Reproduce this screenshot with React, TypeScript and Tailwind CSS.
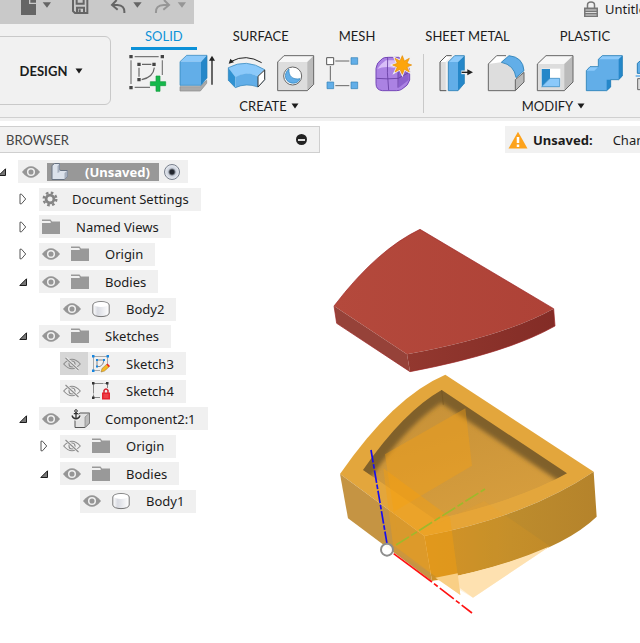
import React from "react";

type Visibility = "on" | "off" | "none";
type IconKind = "gear" | "folder" | "body" | "sketch" | "locked" | "component";

interface TreeNode {
  label: string;
  level: 1 | 2 | 3;
  eye: Visibility;
  icon: IconKind;
  open?: boolean;
  hovered?: boolean;
}

const nodes: TreeNode[] = [
  { label: "Document Settings", level: 1, eye: "none", icon: "gear", open: false },
  { label: "Named Views", level: 1, eye: "none", icon: "folder", open: false },
  { label: "Origin", level: 1, eye: "on", icon: "folder", open: false },
  { label: "Bodies", level: 1, eye: "on", icon: "folder", open: true },
  { label: "Body2", level: 2, eye: "on", icon: "body" },
  { label: "Sketches", level: 1, eye: "on", icon: "folder", open: true },
  { label: "Sketch3", level: 2, eye: "off", icon: "sketch", hovered: true },
  { label: "Sketch4", level: 2, eye: "off", icon: "locked" },
  { label: "Component2:1", level: 1, eye: "on", icon: "component", open: true },
  { label: "Origin", level: 2, eye: "off", icon: "folder", open: false },
  { label: "Bodies", level: 2, eye: "on", icon: "folder", open: true },
  { label: "Body1", level: 3, eye: "on", icon: "body" },
];

const indent = { 1: "pl-[19px]", 2: "pl-[40px]", 3: "pl-[60px]" };

function Eye({ off = false }: { off?: boolean }) {
  return off ? (
    <svg viewBox="0 0 18 14" className="h-[14px] w-[18px]" fill="none" stroke="#8c8c8c" strokeWidth="1.1">
      <path d="M.7 7Q9-2.6 17.3 7Q9 16.6.7 7Z" />
      <circle cx="9" cy="7" r="3" />
      <path d="M3 1l12.5 12" stroke="#f0f0f0" strokeWidth="2.6" />
      <path d="M2.5 1l13 12" />
    </svg>
  ) : (
    <svg viewBox="0 0 18 14" className="h-[14px] w-[18px]">
      <path d="M0 7Q9-4.5 18 7Q9 18.500 0 7Z" fill="#969696" />
      <circle cx="9" cy="7" r="3.3" fill="none" stroke="#f0f0f0" strokeWidth="1.5" />
    </svg>
  );
}

function Disclosure({ open }: { open: boolean }) {
  return (
    <button aria-label={open ? "Collapse" : "Expand"} className="flex w-5 shrink-0 items-center">
      <svg viewBox="0 0 9 12" className="h-3 w-[9px]">
        {open ? (
          <path d="M.8 9.500L7.500 2.800V9.500Z" fill="#777" stroke="#1c1c1c" strokeWidth="1" />
        ) : (
          <path d="M1 1.200H2.500L6.700 6L2.500 10.800H1Z" fill="#fff" stroke="#555" strokeWidth="1" />
        )}
      </svg>
    </button>
  );
}

function NodeIcon({ kind }: { kind: IconKind }) {
  if (kind === "gear")
    return (
      <svg viewBox="0 0 18 18" className="size-[18px]">
        <circle cx="8" cy="9" r="6.300" fill="none" stroke="#858585" strokeWidth="2.400" strokeDasharray="2.600 2.350" />
        <circle cx="8" cy="9" r="3.900" fill="none" stroke="#858585" strokeWidth="2.800" />
      </svg>
    );
  if (kind === "folder")
    return (
      <svg viewBox="0 0 18 18" className="size-[18px]" fill="#999">
        <path d="M0 1.500H8.500L10 3.500H18V16H0V5H9L7.800 3H0Z" />
        <path d="M0 3.700H8.600" stroke="#f0f0f0" strokeWidth=".8" />
      </svg>
    );
  if (kind === "body")
    return (
      <svg viewBox="0 0 18 18" className="size-[18px]">
        <defs>
          <linearGradient id="cylinder">
            <stop offset="0" stopColor="#fff" />
            <stop offset=".3" stopColor="#d9dbe2" />
            <stop offset="1" stopColor="#fff" />
          </linearGradient>
        </defs>
        <path d="M.8 5C.8 .5 17.200 .5 17.200 5V13C17.200 17.800 .8 17.800 .8 13Z" fill="url(#cylinder)" stroke="#777" strokeWidth="1" />
        <ellipse cx="9" cy="4.600" rx="7" ry="2.500" fill="#fff" />
      </svg>
    );
  if (kind === "sketch")
    return (
      <svg viewBox="0 0 18 18" className="size-[18px]" fill="none">
        <path d="M1.500 1.500H15.500V11M1.500 1.500V15.500H8" stroke="#aaa" />
        <path d="M5 5H12Q11.500 10 8 11.500H5Z" stroke="#888" />
        <g fill="#1685df">
          <path d="M0 0h2.500v2.500H0zM14.500 0H17v2.500h-2.500zM0 14.500h2.500V17H0zM4 4h2v2H4zM11 4h2v2h-2zM4 10.500h2v2H4z" />
        </g>
        <path d="M9 17L10 13.500L15 9L17.500 11.500L12.500 16Z" fill="#f7b924" stroke="#8f7132" strokeWidth=".5" />
        <path d="M14.500 9.500L15.500 8.500L18 11L16.500 12Z" fill="#e22" />
      </svg>
    );
  if (kind === "locked")
    return (
      <svg viewBox="0 0 18 18" className="size-[18px]" fill="none">
        <path d="M1.500 1.500H15.500V6M1.500 1.500V15.500H8" stroke="#888" strokeDasharray="10 1" />
        <path d="M0 0h2.500v2.500H0zM14 0h2.500v2.500H14zM0 14.500h2.500V17H0z" fill="#333" />
        <path d="M12 11V8.500Q14 5.500 16 8.500V11" stroke="#d3202b" strokeWidth="1.500" />
        <path d="M10 10.500H18V17.500H10Z" fill="#e5222e" />
        <path d="M11.500 13h5M11.500 15h5" stroke="#f77" strokeWidth=".7" />
      </svg>
    );
  return (
    <svg viewBox="0 0 20 20" className="size-[20px] shrink-0" fill="none">
      <path d="M4 8L9 4H18.500V14L14 18.500H4Z" fill="#e2e2e2" stroke="#555" />
      <path d="M14 8L18.500 4V14L14 18.500Z" fill="#bbb" stroke="#777" strokeWidth=".6" />
      <path d="M5 3V9.500M2.500 5H7.500M1 7Q2 10 5 10Q8 10 9 7" stroke="#f0f0f0" strokeWidth="3.500" />
      <path d="M5 3V9.500M2.800 4.700H7.200M1 6.500Q2 9.800 5 9.800Q8 9.800 9 6.500" stroke="#333" strokeWidth="1.300" />
      <circle cx="5" cy="2" r="1.300" stroke="#333" />
    </svg>
  );
}

function TreeRow({ node }: { node: TreeNode }) {
  const gear = node.icon === "gear";
  return (
    <li className={`flex items-center ${indent[node.level]}`}>
      {node.open === undefined ? <span className="w-5 shrink-0" /> : <Disclosure open={node.open} />}
      <div className="flex h-[23px] items-center bg-[#f0f0f0] pr-3">
        {node.eye === "none" ? (
          <span className="w-[3px]" />
        ) : (
          <button
            aria-label={`Toggle ${node.label}`}
            className={`mr-1 flex h-full w-7 items-center pl-[3px] ${node.hovered ? "bg-[#d6d6d6]" : ""}`}
          >
            <Eye off={node.eye === "off"} />
          </button>
        )}
        <span className="flex w-[18px] items-center">
          <NodeIcon kind={node.icon} />
        </span>
        <span className={`whitespace-nowrap ${gear ? "pl-3" : "pl-4"}`}>{node.label}</span>
      </div>
    </li>
  );
}

function ToolIcon({ x, label, children }: { x: number; label: string; children: React.ReactNode }) {
  return (
    <button aria-label={label} className="shrink-0">
      <svg viewBox={`${x} 162 147 120`} className="h-10 w-[49px]" fill="none">
        {children}
      </svg>
    </button>
  );
}

function Caret() {
  return (
    <svg viewBox="0 0 8 6" className="h-[6px] w-2" fill="currentColor">
      <path d="M.5 .5H7.500L4 5.500Z" />
    </svg>
  );
}

function CreateTools() {
  return (
    <div className="flex">
      <ToolIcon x={366} label="Create Sketch">
        <path d="M404 170H476M393 181V252M404 262H450M487 181V225" stroke="#777" strokeWidth="3.500" />
        <path d="M426 193H454M417 203V230M463 203Q460 232 425 239" stroke="#666" strokeWidth="3.500" />
        <path d="M388 165h10v10h-10zM482 165h10v10h-10zM388 258h10v10h-10zM412 188h10v10h-10zM457 188h10v10h-10zM412 234h10v10h-10z" fill="#444" />
        <path d="M468 228h12v17h17v12h-17v17h-12v-17h-17v-12h17z" fill="#15b84b" stroke="#129c3d" strokeWidth="2" />
      </ToolIcon>
      <ToolIcon x={513} label="Extrude">
        <path d="M540 260H601L620 241V250L601 273H540Z" fill="#aaa" stroke="#888" strokeWidth="2" />
        <path d="M540 185L560 166H621L603 185Z" fill="#8bc9fa" />
        <path d="M540 185H603V256H540Z" fill="#62aee8" />
        <path d="M603 185L621 166V234L603 256Z" fill="#2587c9" />
        <path d="M540 185L560 166H621V234L603 256H540Z" stroke="#287eb6" strokeWidth="2" />
        <path d="M636 254V178" stroke="#222" strokeWidth="4" />
        <path d="M627 182L636 167L645 182Z" fill="#222" />
      </ToolIcon>
      <ToolIcon x={21} label="Revolve">
        <path d="M46 203Q100 174 155 209L135 229Q100 212 67 232Z" fill="#8bc9fa" />
        <path d="M46 203L67 231V263L46 241Z" fill="#2f92d2" />
        <path d="M67 231Q100 211 135 229V261Q99 248 67 263Z" fill="#62aee8" />
        <path d="M46 203Q100 174 155 209V239L135 261Q99 248 67 263L46 241Z" stroke="#287eb6" strokeWidth="2" />
        <path d="M135 229L155 210V239L135 261Z" fill="#fff" stroke="#333" strokeWidth="3" />
        <path d="M146 188Q99 160 55 184" stroke="#222" strokeWidth="3" />
        <path d="M47 191L52 176L63 187Z" fill="#222" />
      </ToolIcon>
      <ToolIcon x={168} label="Hole">
        <path d="M194 186L213 167H302V253L283 272H194Z" fill="#ddd" />
        <path d="M194 186L213 167H302L283 186Z" fill="#f7f7f7" />
        <path d="M283 186L302 167V253L283 272Z" fill="#bbb" />
        <path d="M194 186L213 167H302V253L283 272H194Z" stroke="#666" strokeWidth="3" />
        <circle cx="239" cy="228" r="27" fill="#fff" stroke="#666" strokeWidth="3" />
        <path d="M228 207C214 217 214 237 226 245C240 254 257 249 261 236C238 240 226 228 228 207Z" fill="#62aee8" stroke="#267bb6" strokeWidth="2" />
      </ToolIcon>
      <ToolIcon x={315} label="Pattern">
        <path d="M367 183H409M352 198V242M367 257H409" stroke="#666" strokeWidth="3" />
        <path d="M341 173h21v21h-21z" fill="#fff" stroke="#555" strokeWidth="3" />
        <path d="M414 173h20v20h-20zM342 246h20v20h-20zM414 246h20v20h-20z" fill="#62aee8" stroke="#3281b5" strokeWidth="2" />
      </ToolIcon>
      <ToolIcon x={462} label="Create Form">
        <path d="M489 205Q490 188 508 176Q512 172 526 172H557Q590 194 590 215V240Q586 257 566 268Q560 272 550 272H508Q489 270 489 251Z" fill="#ab82e3" stroke="#7547b8" strokeWidth="3" />
        <path d="M493 207Q501 193 519 181H560L544 204Q515 196 493 207Z" fill="#d9bff8" />
        <path d="M555 209L587 190V240L557 263Z" fill="#8c60cd" />
        <path d="M524 172Q521 216 527 270M490 235Q522 238 556 235L590 216M555 263V205L571 187" stroke="#653ca0" strokeWidth="2.500" />
        <path d="M568 167l6 16 15-8-7 15 14 5-14 6 7 15-15-8-6 15-7-15-15 8 7-15-14-6 14-5-7-15 15 8z" fill="#fda50b" stroke="#f0f0f0" strokeWidth="7" paintOrder="stroke" />
        <path d="M568 167l6 16 15-8-7 15 14 5-14 6 7 15-15-8-6 15-7-15-15 8 7-15-14-6 14-5-7-15 15 8z" stroke="#e68b00" strokeWidth="2" />
      </ToolIcon>
    </div>
  );
}

function ModifyTools() {
  return (
    <div className="flex">
      <ToolIcon x={12} label="Press Pull">
        <path d="M39 186L58 167H74L56 186V272H39Z" fill="#ddd" />
        <path d="M39 186L58 167H74L56 186Z" fill="#fff" />
        <path d="M58 272H39V186L58 167H74" stroke="#555" strokeWidth="3" />
        <path d="M64 186L83 167H112L93 186Z" fill="#8bc9fa" />
        <path d="M64 186H93V272H64Z" fill="#62aee8" />
        <path d="M93 186L112 167V250L93 272Z" fill="#2587c9" />
        <path d="M64 186L83 167H112V250L93 272H64Z" stroke="#287eb6" strokeWidth="2.500" />
        <path d="M103 217H127" stroke="#f0f0f0" strokeWidth="11" />
        <path d="M104 217H128" stroke="#222" strokeWidth="4" />
        <path d="M121 208L138 217L121 226V217Z" fill="#222" />
      </ToolIcon>
      <ToolIcon x={159} label="Fillet">
        <path d="M184 192L209 167H237L222 187Q263 192 266 237L291 217V246L265 272H184Z" fill="#ddd" />
        <path d="M184 192L209 167H237L222 187Z" fill="#fff" />
        <path d="M265 241L291 217V246L265 272Z" fill="#bbb" />
        <path d="M291 217V246L265 272H184V192L209 167H237M265 272V239L291 217" stroke="#666" strokeWidth="3" />
        <path d="M223 187L246 167Q288 171 291 212L267 233Q262 195 223 187Z" fill="#62aee8" stroke="#287eb6" strokeWidth="2.500" />
      </ToolIcon>
      <ToolIcon x={306} label="Shell">
        <path d="M331 192L357 167H438V246L412 272H331Z" fill="#ddd" />
        <path d="M331 192L357 167H438L412 192Z" fill="#f7f7f7" />
        <path d="M412 192L438 167V246L412 272Z" fill="#bbb" />
        <path d="M331 192L357 167H438V246L412 272H331Z" stroke="#666" strokeWidth="3" />
        <path d="M343 206H400V261H343Z" fill="#fff" />
        <path d="M344 207H369V235L344 260Z" fill="#2587c9" />
        <path d="M344 260L369 235H398V260Z" fill="#8bc9fa" stroke="#287eb6" strokeWidth="2" />
      </ToolIcon>
      <ToolIcon x={453} label="Combine">
        <path d="M478 212L489 200H514V178L526 167H586V228L575 239H551V261L539 272H478Z" fill="#62aee8" />
        <path d="M514 178L526 167H586L575 178ZM478 212L489 200H514L502 212Z" fill="#8bc9fa" />
        <path d="M575 178L586 167V228L575 239ZM539 239H551V261L539 272Z" fill="#2587c9" />
        <path d="M478 212L489 200H514V178L526 167H586V228L575 239H551V261L539 272H478Z" stroke="#287eb6" strokeWidth="2.500" />
      </ToolIcon>
      <ToolIcon x={600} label="Split Body">
        <path d="M631 220V190L655 170H730V220Z" fill="#62aee8" stroke="#287eb6" strokeWidth="3" />
        <path d="M626 228H740" stroke="#62aee8" strokeWidth="4" />
        <path d="M632 236H720V269H632Z" fill="#ddd" stroke="#666" strokeWidth="3" />
      </ToolIcon>
    </div>
  );
}

function QuickAccess() {
  return (
    <div className="flex h-6 w-[194px] shrink-0 bg-[#c9c9c9]">
      <button aria-label="File" className="w-[60px]">
        <svg viewBox="0 0 180 72" className="h-6 w-[60px]" fill="#656565">
          <path d="M63-10H108V45H63Z" />
          <path d="M89-10V10H108" fill="none" stroke="#c9c9c9" strokeWidth="4" />
          <path d="M95-2h13v7H95z" />
          <path d="M128 7H153L141 23Z" />
        </svg>
      </button>
      <button aria-label="Save" className="w-10">
        <svg viewBox="180 0 120 72" className="h-6 w-10" fill="none" stroke="#656565" strokeWidth="6">
          <path d="M219-5V33L225 39H262V-5M230-5V11H251V-5M231 38V23H252V38" />
          <path d="M236 28h6v10h-6z" fill="#656565" stroke="none" />
        </svg>
      </button>
      <button aria-label="Undo" className="w-[46px]">
        <svg viewBox="300 0 138 72" className="h-6 w-[46px]" fill="none" stroke="#656565" strokeWidth="6">
          <path d="M350 0L336 15L353 29M336 15H352Q375 16 373 39" />
          <path d="M400 7H425L412 23Z" fill="#656565" stroke="none" />
        </svg>
      </button>
      <button aria-label="Redo" className="w-12">
        <svg viewBox="438 0 144 72" className="h-6 w-12" fill="none" stroke="#969696" strokeWidth="6">
          <path d="M492 0L507 15L490 29M507 15H491Q466 16 468 39" />
          <path d="M533 7H558L546 23Z" fill="#969696" stroke="none" />
        </svg>
      </button>
    </div>
  );
}

function Header() {
  const tabs = ["SOLID", "SURFACE", "MESH", "SHEET METAL", "PLASTIC"];
  return (
    <header className="overflow-hidden bg-[#f1f1f1] pb-[3px]">
      <div className="flex h-6 justify-between">
        <QuickAccess />
        <div className="flex h-[18px] w-[56px] shrink-0 items-center gap-[7px] text-[13px]">
          <svg viewBox="0 0 14 16" className="h-4 w-[14px] shrink-0" fill="none">
            <path d="M3.500 7V4Q3.500 1 7 1Q10.500 1 10.500 4V7" stroke="#777" strokeWidth="1.500" />
            <path d="M0 6.500H14V16H0Z" fill="#777" />
            <path d="M1.500 9H12.500M1.500 11.500H12.500M1.500 14H12.500" stroke="#ddd" />
          </svg>
          <span>Untitled</span>
        </div>
      </div>
      <div className="flex h-[94px] border-b border-[#d0d0d0] font-[family-name:Lato,sans-serif]">
        <button className="-ml-2 mt-3 flex h-[69px] w-[119px] shrink-0 items-center justify-center gap-2 rounded-md border border-[#c9c9c9] text-[13px] font-bold">
          DESIGN <Caret />
        </button>
        <div className="ml-[11px] min-w-0 flex-1">
          <nav className="ml-[9px] flex h-[26px] gap-[22px] text-[13px]">
            {tabs.map((tab, i) => (
              <button
                key={tab}
                className={`shrink-0 border-b-3 px-[14px] whitespace-nowrap ${
                  i === 0 ? "border-[#0c91d8] text-[#0c91d8]" : "border-transparent"
                }`}
              >
                {tab}
              </button>
            ))}
          </nav>
          <div className="flex pt-1 text-[13px]">
            <div className="flex shrink-0 flex-col items-center gap-1">
              <CreateTools />
              <button className="flex h-4 items-center gap-1">
                CREATE <Caret />
              </button>
            </div>
            <div className="mx-[7px] h-[59px] w-px shrink-0 bg-[#c9c9c9]" />
            <div className="flex shrink-0 flex-col items-center gap-1">
              <ModifyTools />
              <button className="flex h-4 items-center gap-1">
                MODIFY <Caret />
              </button>
            </div>
          </div>
        </div>
      </div>
    </header>
  );
}

function Model() {
  return (
    <svg viewBox="0 0 960 1470" className="h-[490px] w-[320px]" role="img" aria-label="Model view">
      <defs>
        <linearGradient id="redTop">
          <stop offset="0" stopColor="#b4493c" />
          <stop offset="1" stopColor="#ae4237" />
        </linearGradient>
        <linearGradient id="redFront">
          <stop offset="0" stopColor="#93382f" />
          <stop offset="1" stopColor="#832c26" />
        </linearGradient>
        <linearGradient id="goldFront">
          <stop offset="0" stopColor="#cf9227" />
          <stop offset=".5" stopColor="#bd8c2d" />
          <stop offset="1" stopColor="#b5832b" />
        </linearGradient>
        <linearGradient id="floor" x1="0" y1="0" x2=".5" y2="1">
          <stop offset="0" stopColor="#c48f37" />
          <stop offset="1" stopColor="#d69d3d" />
        </linearGradient>
        <filter id="soft">
          <feGaussianBlur stdDeviation="7" />
        </filter>
        <clipPath id="pocket">
          <path d="M365 75L741 325Q600 405 345 464L129 315Q250 140 365 75Z" />
        </clipPath>
      </defs>
      <g transform="translate(0 186)">
        <path d="M300 43L701 281Q550 365 261 418L42 273Q170 105 300 43Z" fill="url(#redTop)" />
        <path d="M42 273L261 418L270 470L50 325Z" fill="#964239" />
        <path d="M261 418Q550 365 701 281L705 333Q560 415 270 470Z" fill="url(#redFront)" />
        <path d="M300 43L701 281L705 333Q560 415 270 470L50 325L42 273Q170 105 300 43Z" fill="none" stroke="#9b2222" strokeWidth="2" />
      </g>
      <g transform="translate(0 636)">
        <path d="M376 29L821 320Q620 455 313 513L60 327Q220 95 376 29Z" fill="#e3a63c" />
        <path d="M60 327L313 513L336 648L84 460Z" fill="#c59443" />
        <path d="M313 513Q620 455 821 320L830 455Q700 580 336 648Z" fill="url(#goldFront)" />
        <g clipPath="url(#pocket)">
          <path d="M365 75L741 325Q600 405 345 464L129 315Q250 140 365 75Z" fill="url(#floor)" />
          <g filter="url(#soft)" fill="none">
            <path d="M105 345L129 315Q250 140 365 75L780 351" stroke="#80602a" strokeWidth="66" />
          </g>
          <path d="M365 75L370 119" stroke="#725522" strokeWidth="2" />
        </g>
        <path d="M195 268L436 130L456 302L222 440L230 500Z" fill="#f49f16" fillOpacity=".42" />
        <path d="M190 310L390 457L421 690L219 540Z" fill="#f8a00c" fillOpacity=".4" />
        <path d="M202 548L493 408L690 544L459 698Z" fill="#f8a51f" fillOpacity=".14" />
        <path d="M336 648Q540 610 690 544L459 698L384 643Z" fill="#fee1b0" />
        <path d="M346 638L413 625L421 690Z" fill="#f9cf85" />
        <path d="M228 540L495 372" stroke="#9eb92b" strokeWidth="5" strokeDasharray="46 8 20 8" />
        <path d="M153 255L201 536" stroke="#160df0" strokeWidth="5" strokeDasharray="38 5 14 5" />
        <path d="M221 566L336 651" stroke="#ff1212" strokeWidth="5" />
        <path d="M342 656L456 744" stroke="#ff1212" strokeWidth="5" strokeDasharray="14 8 53 8" />
        <circle cx="201" cy="554" r="18" fill="#fff" fillOpacity=".94" stroke="#8d8d8d" strokeWidth="6" />
      </g>
    </svg>
  );
}

export default function App() {
  return (
    <div className="min-h-screen overflow-hidden bg-white font-[family-name:'Noto_Sans',sans-serif] text-[13px] leading-4 text-[#1c1c1c]">
      <Header />
      <main className="flex pt-[5px]">
        <aside className="w-[320px] shrink-0">
          <div className="flex h-[27px] items-center justify-between border border-l-0 border-[#cfcfcf] bg-[#f1f1f1] pr-3 pl-[6px]">
            <h2 className="font-[family-name:Lato,sans-serif] text-[13px] text-[#444]">BROWSER</h2>
            <button aria-label="Collapse browser" className="flex size-[11px] items-center justify-center rounded-full bg-[#222]">
              <span className="h-[2px] w-[7px] bg-[#ddd]" />
            </button>
          </div>
          <ul className="mt-[5px] grid h-[357px] auto-rows-fr">
            <li className="-ml-[2px] flex items-center">
              <Disclosure open />
              <div className="flex h-[23px] items-center bg-[#f0f0f0] pr-2">
                <button aria-label="Toggle document" className="flex w-[29px] pl-1">
                  <Eye />
                </button>
                <div className="flex h-[18px] w-[112px] items-center bg-[#989898] pl-1 font-bold text-white">
                  <svg viewBox="0 0 18 18" className="mr-4 size-[18px] shrink-0">
                    <path d="M1 2.500L3.500 .5H8.500V7L10 7.500H16.500V13L13.500 16.500H1Z" fill="#dce2eb" stroke="#687382" />
                    <path d="M6.500 3L8.500 1V9L6.500 10ZM13.500 10L16.500 7.500V13L13.500 16.500Z" fill="#a6afbe" />
                  </svg>
                  <label htmlFor="active-document">(Unsaved)</label>
                </div>
                <input
                  id="active-document"
                  type="radio"
                  defaultChecked
                  className="ml-[5px] size-4 appearance-none rounded-full border border-[#777f8c] bg-[radial-gradient(circle,#22262d_0_2px,#cbd1dc_4px,#f1f3f7_8px)]"
                />
              </div>
            </li>
            {nodes.map((node, i) => (
              <TreeRow key={i} node={node} />
            ))}
          </ul>
        </aside>
        <section className="min-w-0 flex-1 overflow-hidden">
          <div className="ml-[185px] flex h-[27px] items-center bg-[#f1f1f1] pl-[3px] whitespace-nowrap">
            <svg viewBox="0 0 20 18" className="h-[18px] w-5 shrink-0">
              <path d="M10 .8L19.500 17.500H.5Z" fill="#fda21b" />
              <path d="M10 6V12M10 13.500V16" stroke="#fff" strokeWidth="2.500" />
            </svg>
            <strong className="ml-[5px]">Unsaved:</strong>
            <span className="ml-5">Changes may be lost</span>
          </div>
          <Model />
        </section>
      </main>
    </div>
  );
}
